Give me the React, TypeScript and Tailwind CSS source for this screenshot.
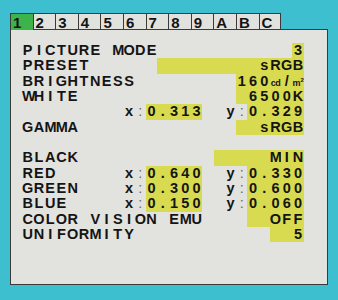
import React from "react";

type Cell = { t: string; kind?: "cd" | "m2" | "colon" };

function cellsFrom(s: string): Cell[] {
  const out: Cell[] = [];
  for (const ch of s) {
    if (ch === "\u0001") out.push({ t: "cd", kind: "cd" });
    else if (ch === "\u0002") out.push({ t: "m", kind: "m2" });
    else if (ch === ":") out.push({ t: ":", kind: "colon" });
    else out.push({ t: ch });
  }
  return out;
}

function place(row: string, items: [number, string][]): string {
  const res = row.padEnd(25, " ").split("");
  for (const [col, s] of items) {
    Array.from(s).forEach((c, i) => {
      res[col + i] = c;
    });
  }
  return res.slice(0, 25).join("");
}

type RowDef = { text: string; hl: [number, number][] };

const rows: RowDef[] = [
  { text: place("PICTURE MODE", [[24, "3"]]), hl: [[24, 25]] },
  { text: place("PRESET", [[21, "sRGB"]]), hl: [[12, 25]] },
  { text: place("BRIGHTNESS", [[19, "160\u0001/\u0002"]]), hl: [[19, 25]] },
  { text: place("WHITE", [[20, "6500K"]]), hl: [[19, 25]] },
  { text: place("", [[9, "x:0.313"], [18, "y:0.329"]]), hl: [[11, 16], [20, 25]] },
  { text: place("GAMMA", [[21, "sRGB"]]), hl: [[19, 25]] },
  { text: place("", []), hl: [] },
  { text: place("BLACK", [[22, "MIN"]]), hl: [[17, 25]] },
  { text: place("RED", [[9, "x:0.640"], [18, "y:0.330"]]), hl: [[11, 16], [20, 25]] },
  { text: place("GREEN", [[9, "x:0.300"], [18, "y:0.600"]]), hl: [[11, 16], [20, 25]] },
  { text: place("BLUE", [[9, "x:0.150"], [18, "y:0.060"]]), hl: [[11, 16], [20, 25]] },
  { text: place("COLOR VISION EMU", [[22, "OFF"]]), hl: [[20, 25]] },
  { text: place("UNIFORMITY", [[24, "5"]]), hl: [[22, 25]] },
];

function isHl(hl: [number, number][], i: number) {
  return hl.some(([a, b]) => i >= a && i < b);
}

function Row({ def }: { def: RowDef }) {
  const cells = cellsFrom(def.text);
  return (
    <div className="flex h-[15.33px] leading-[15.33px]">
      {cells.map((c, i) => (
        <span
          key={i}
          className={
            "inline-block w-[11.27px] shrink-0 text-center whitespace-pre " +
            (isHl(def.hl, i) ? "bg-[#d8db4f]" : "")
          }
        >
          {c.kind === "cd" ? (
            <span className="text-[9px] tracking-[-0.5px]">cd</span>
          ) : c.kind === "m2" ? (
            <span className="text-[9px]">
              m<span className="text-[6px] relative -top-[4px]">2</span>
            </span>
          ) : c.kind === "colon" ? (
            <span className="text-[#6a6a66] font-normal">:</span>
          ) : (
            c.t
          )}
        </span>
      ))}
    </div>
  );
}

const tabs = ["1", "2", "3", "4", "5", "6", "7", "8", "9", "A", "B", "C"];

export default function App() {
  return (
    <div
      className="w-[338px] h-[300px] bg-[#3dbfd0] pt-[13px] pl-[10px] text-[#141414] font-bold"
      style={{ fontFamily: '"Liberation Sans", Arial, sans-serif' }}
    >
      <div className="w-[318px] flex h-[17px]">
        {tabs.map((t, i) => (
          <div
            key={t}
            className={
              "w-[22.6px] shrink-0 h-[17px] border-t border-l border-[#3a3a3a] text-[15px] leading-[17px] pl-[2px] " +
              (i === 0 ? "bg-[#3cb44b]" : "bg-[#e1e1dd] border-b") +
              (i === tabs.length - 1 ? " border-r" : "")
            }
          >
            {t}
          </div>
        ))}
        <div className="flex-1 border-b border-[#3a3a3a]" />
      </div>
      <div className="w-[318px] h-[255px] bg-[#e2e2de] border-l border-r border-b border-[#3a3a3a] pt-[13px] pl-[11px] text-[14.5px]">
        {rows.map((r, i) => (
          <Row key={i} def={r} />
        ))}
      </div>
    </div>
  );
}
